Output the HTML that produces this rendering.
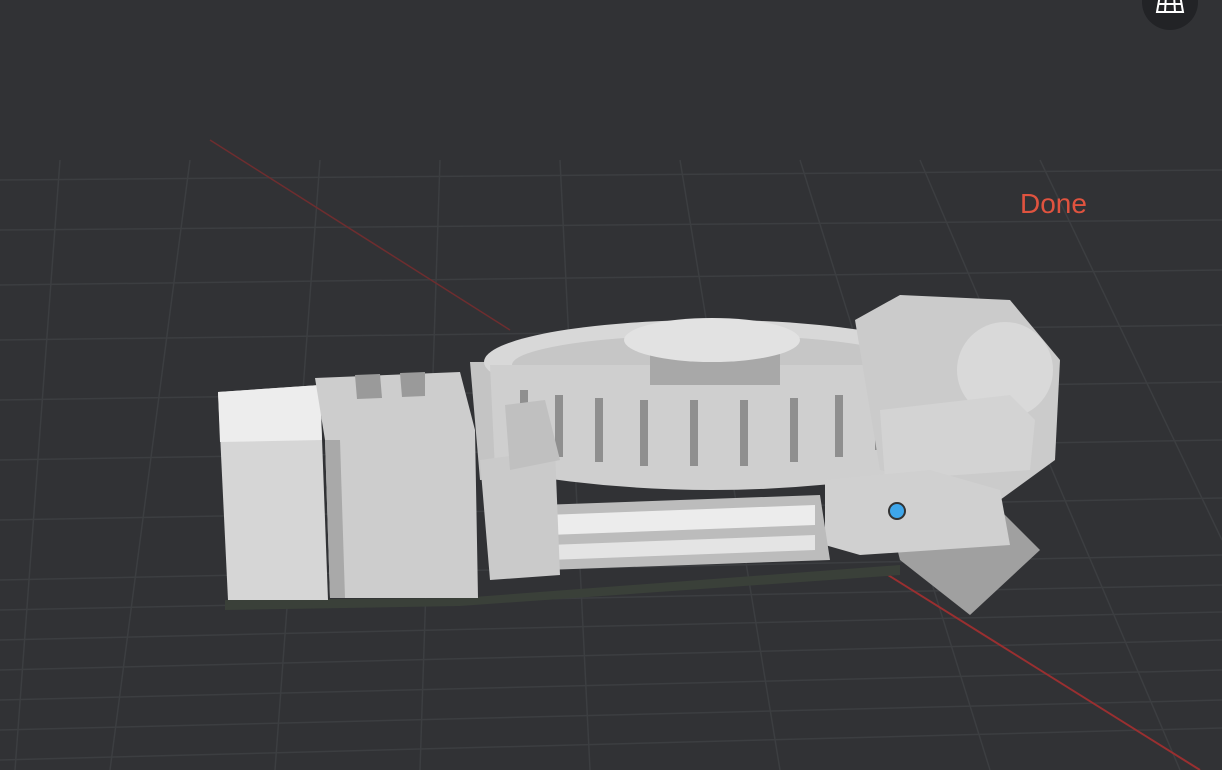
<!DOCTYPE html>
<html><head><meta charset="utf-8"><style>
html,body{margin:0;padding:0;background:#313235;overflow:hidden}
svg{display:block}
.done{position:absolute;left:1020px;top:188px;font:28px "Liberation Sans",sans-serif;color:#e0533f}
</style></head><body>
<svg width="1222" height="770" viewBox="0 0 1222 770">
<rect width="1222" height="770" fill="#313235"/>
<g stroke="#3c3e41" stroke-width="1.5" fill="none">
<path d="M0 180 L1222 170"/><path d="M0 230 L1222 220"/><path d="M0 285 L1222 270"/><path d="M0 340 L1222 325"/>
<path d="M0 400 L1222 382"/><path d="M0 460 L1222 440"/><path d="M0 520 L1222 498"/><path d="M0 580 L1222 555"/>
<path d="M0 640 L1222 612"/><path d="M0 700 L1222 670"/><path d="M0 760 L1222 728"/>
<path d="M0 610 L1222 585"/><path d="M0 670 L1222 640"/><path d="M0 730 L1222 700"/>
<path d="M60 160 L15 770"/><path d="M190 160 L110 770"/><path d="M320 160 L275 770"/><path d="M440 160 L420 770"/>
<path d="M560 160 L590 770"/><path d="M680 160 L780 770"/><path d="M800 160 L990 770"/><path d="M920 160 L1180 770"/>
<path d="M1040 160 L1222 540"/>
</g>
<path d="M210 140 L510 330" stroke="#6e2d2f" stroke-width="1.5"/>
<path d="M880 570 L1200 770" stroke="#9a2f30" stroke-width="2"/>
<circle cx="1170" cy="2" r="28" fill="#222326"/>
<path d="M1157 12 L1160 -5 L1180 -5 L1183 12 Z M1158 4 H1182 M1166 -5 L1165 12 M1174 -5 L1175 12" stroke="#fff" stroke-width="2" fill="none"/>
<path d="M225 600 L460 598 L900 565 L900 575 L460 606 L225 610Z" fill="#3a4039"/>
<path d="M218 392 L320 385 L328 600 L228 600Z" fill="#d6d6d6"/>
<path d="M218 392 L320 385 L322 440 L220 442Z" fill="#ededed"/>
<path d="M315 378 L460 372 L475 430 L478 598 L330 598 L325 440Z" fill="#cdcdcd"/>
<path d="M325 440 L340 440 L345 598 L330 598Z" fill="#a9a9a9"/>
<path d="M355 375 L380 374 L382 398 L357 399Z M400 373 L425 372 L425 396 L402 397Z" fill="#9a9a9a"/>
<path d="M470 362 L895 360 L900 470 L480 480Z" fill="#c4c4c4"/>
<ellipse cx="712" cy="362" rx="228" ry="42" fill="#d8d8d8"/>
<ellipse cx="712" cy="365" rx="200" ry="30" fill="#c6c6c6"/>
<path d="M490 365 L935 365 L930 470 Q712 510 495 470Z" fill="#cfcfcf"/>
<g fill="#8f8f8f">
<rect x="520" y="390" width="8" height="60"/><rect x="555" y="395" width="8" height="62"/><rect x="595" y="398" width="8" height="64"/>
<rect x="640" y="400" width="8" height="66"/><rect x="690" y="400" width="8" height="66"/><rect x="740" y="400" width="8" height="66"/>
<rect x="790" y="398" width="8" height="64"/><rect x="835" y="395" width="8" height="62"/><rect x="875" y="390" width="8" height="60"/>
</g>
<path d="M650 350 L780 350 L780 385 L650 385Z" fill="#a8a8a8"/>
<ellipse cx="712" cy="340" rx="88" ry="22" fill="#e2e2e2"/>
<path d="M855 320 L900 295 L1010 300 L1060 360 L1055 460 L1000 500 L880 470Z" fill="#cbcbcb"/>
<circle cx="1005" cy="370" r="48" fill="#d9d9d9"/>
<path d="M880 410 L1010 395 L1035 420 L1030 470 L885 480Z" fill="#d3d3d3"/>
<path d="M890 520 L990 500 L1040 550 L970 615 L900 560Z" fill="#a0a0a0"/>
<path d="M825 480 L930 470 L1000 490 L1010 545 L860 555 L825 545Z" fill="#d0d0d0"/>
<circle cx="897" cy="511" r="8" fill="#3ea6ea" stroke="#333" stroke-width="2"/>
<path d="M540 505 L820 495 L830 560 L545 570Z" fill="#bcbcbc"/>
<path d="M545 515 L815 505 L815 525 L548 535Z" fill="#ececec"/>
<path d="M548 545 L815 535 L815 550 L548 560Z" fill="#e4e4e4"/>
<path d="M480 460 L555 450 L560 575 L490 580Z" fill="#cacaca"/>
<path d="M505 405 L545 400 L560 460 L510 470Z" fill="#c0c0c0"/>
</svg>
<div class="done">Done</div>
</body></html>
